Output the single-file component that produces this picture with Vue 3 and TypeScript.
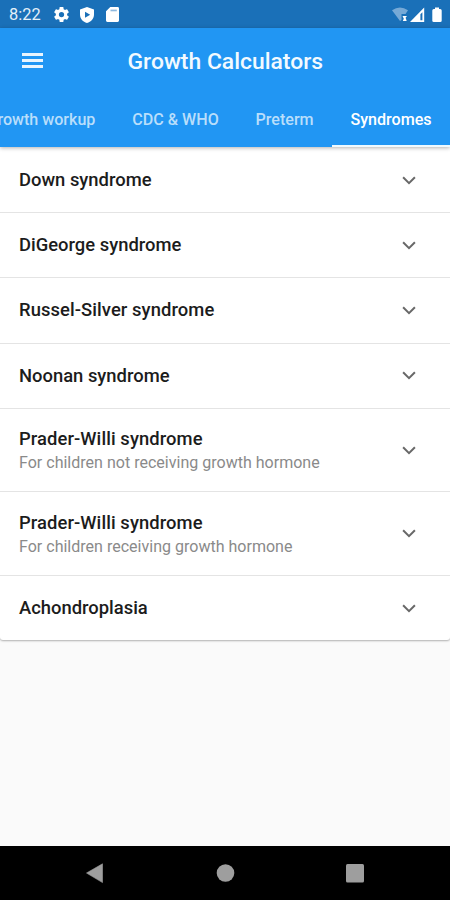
<script setup lang="ts">
interface Syndrome {
  id: number
  name: string
  note?: string
}

const tabs: { label: string; key: string }[] = [
  { label: 'Growth workup', key: 'workup' },
  { label: 'CDC & WHO', key: 'cdc' },
  { label: 'Preterm', key: 'preterm' },
  { label: 'Syndromes', key: 'syndromes' },
]
const activeTab = 'syndromes'

const syndromes: Syndrome[] = [
  { id: 1, name: 'Down syndrome' },
  { id: 2, name: 'DiGeorge syndrome' },
  { id: 3, name: 'Russel-Silver syndrome' },
  { id: 4, name: 'Noonan syndrome' },
  { id: 5, name: 'Prader-Willi syndrome', note: 'For children not receiving growth hormone' },
  { id: 6, name: 'Prader-Willi syndrome', note: 'For children receiving growth hormone' },
  { id: 7, name: 'Achondroplasia' },
]
</script>

<template>
  <div class="screen">
    <div class="status">
      <span class="clock">8:22</span>
      <svg class="gear" viewBox="2 2 20 20" width="15" height="15">
        <path fill="#fff" d="M19.43 12.98c.04-.32.07-.64.07-.98s-.03-.66-.07-.98l2.11-1.65c.19-.15.24-.42.12-.64l-2-3.46c-.12-.22-.39-.3-.61-.22l-2.49 1c-.52-.4-1.08-.73-1.69-.98l-.38-2.65C14.46 2.18 14.25 2 14 2h-4c-.25 0-.46.18-.49.42l-.38 2.65c-.61.25-1.17.59-1.69.98l-2.49-1c-.23-.09-.49 0-.61.22l-2 3.46c-.13.22-.07.49.12.64l2.11 1.65c-.04.32-.07.65-.07.98s.03.66.07.98l-2.11 1.65c-.19.15-.24.42-.12.64l2 3.46c.12.22.39.3.61.22l2.49-1c.52.4 1.08.73 1.69.98l.38 2.65c.03.24.24.42.49.42h4c.25 0 .46-.18.49-.42l.38-2.65c.61-.25 1.17-.59 1.69-.98l2.49 1c.23.09.49 0 .61-.22l2-3.46c.12-.22.07-.49-.12-.64zM12 15.5a3.5 3.5 0 1 1 0-7 3.5 3.5 0 0 1 0 7z" />
      </svg>
      <svg class="shield" viewBox="0 0 14 16" width="14" height="16">
        <path fill="#fff" fill-rule="evenodd" d="M7 0 14 2.6V7.5C14 11.5 11 15 7 16C3 15 0 11.5 0 7.5V2.6ZM5 4.8V10.8L10.2 7.8Z" />
      </svg>
      <svg class="card" viewBox="0 0 13 15" width="13" height="15">
        <path fill="#fff" fill-rule="evenodd" d="M4.3 0H11.6A1.4 1.4 0 0 1 13 1.4V13.6A1.4 1.4 0 0 1 11.6 15H1.4A1.4 1.4 0 0 1 0 13.6V4.3Z" />
        <path fill="#8fb9de" d="M4.5 2.6H10.8V4.3H4.5Z" />
      </svg>
      <span class="grow"></span>
      <svg class="signals" viewBox="0 0 52 18" width="52" height="18">
        <path fill="#76a9d6" d="M0 4.2Q8-1.2 16 4.2L13.5 8H9.5V14L8 15Z" />
        <path fill="#fff" d="M10.5 10H15L13.6 11.8 14.7 15H10.8L11.8 12.7Z" />
        <path fill="#fff" fill-rule="evenodd" d="M18 16 32.2 1.5V16ZM28.4 8.2V14.2H30.4V6.2Z" />
        <path fill="#fff" d="M43 1.5H47V3H48.2Q49.7 3 49.7 4.5V14.7Q49.7 16 48.2 16H41.8Q40.3 16 40.3 14.7V4.5Q40.3 3 41.8 3H43Z" />
      </svg>
    </div>

    <header class="appbar">
      <div class="titlebar">
        <button class="menu" aria-label="Menu"><i></i><i></i><i></i></button>
        <h1>Growth Calculators</h1>
      </div>
      <nav class="tabs">
        <a v-for="tab in tabs" :key="tab.key" :class="['tab', tab.key, { active: tab.key === activeTab }]">{{ tab.label }}</a>
      </nav>
    </header>

    <main class="body">
      <ul class="list">
        <li v-for="item in syndromes" :key="item.id" :class="['row', { tall: item.note }]">
          <div class="copy">
            <div :class="['name', { hyphenated: item.name.includes('-') }]">{{ item.name }}</div>
            <div v-if="item.note" class="note">{{ item.note }}</div>
          </div>
          <svg viewBox="0 0 14 9" width="14" height="9">
            <path d="M1.1 1.2 7 7.1 12.9 1.2" fill="none" stroke="#686868" stroke-width="2" />
          </svg>
        </li>
      </ul>
    </main>

    <footer class="navbar">
      <svg viewBox="0 0 450 54" width="450" height="54" fill="#9e9e9e">
        <path d="M86.5 27 102.5 17.8V36.6Z" stroke="#9e9e9e" stroke-width=".6" stroke-linejoin="round" />
        <circle cx="225.5" cy="27" r="8.8" />
        <rect x="346" y="18" width="18" height="18.5" rx="1.5" />
      </svg>
    </footer>
  </div>
</template>

<style>
body {
  margin: 0;
}
</style>

<style scoped>
.screen {
  display: flex;
  flex-direction: column;
  width: 450px;
  height: 900px;
  overflow: hidden;
  background: #fafafa;
  font-family: Roboto, "Liberation Sans", sans-serif;
}
.status {
  display: flex;
  align-items: center;
  flex: none;
  box-sizing: border-box;
  height: 28px;
  padding: 1px 6px 0 9px;
  background: #1a70b8;
}
.clock {
  width: 45px;
  color: #e3eff9;
  font-size: 16.4px;
  line-height: 28px;
}
.shield {
  margin-left: 11px;
}
.card {
  margin-left: 12px;
}
.grow {
  flex: 1;
}
.appbar {
  position: relative;
  z-index: 1;
  flex: none;
  height: 119px;
  background: #2196f3;
  box-shadow: 0 1px 4px rgba(0, 0, 0, 0.3);
}
.titlebar {
  display: flex;
  align-items: center;
  height: 64px;
}
.menu {
  display: flex;
  flex-direction: column;
  gap: 3px;
  width: 21px;
  margin: 0 0 0 22px;
  padding: 0;
  border: 0;
  background: none;
}
.menu i {
  height: 3px;
  background: #e9f5fe;
}
h1 {
  margin: 4px 0 0 84.5px;
  color: #f3faff;
  font-size: 22.9px;
  font-weight: 500;
  line-height: 30px;
  white-space: nowrap;
}
.tabs {
  display: flex;
  justify-content: flex-end;
  height: 55px;
}
.tab {
  flex: none;
  box-sizing: border-box;
  height: 55px;
  padding: 0 18.4px;
  color: #b9defb;
  font-size: 16.1px;
  font-weight: 500;
  line-height: 55px;
  white-space: nowrap;
}
.tab.active {
  border-bottom: 2.4px solid #effaff;
  color: #fff;
}
.body {
  flex: 1;
}
.list {
  margin: 0;
  padding: 1px 0 0;
  border-radius: 0 0 3px 3px;
  background: #fff;
  box-shadow: 0 1px 2px rgba(0, 0, 0, 0.3);
  list-style: none;
}
.row {
  display: flex;
  align-items: center;
  justify-content: space-between;
  box-sizing: border-box;
  height: 65.2px;
  padding: 0 34px 0 19px;
  border-bottom: 1.5px solid #e4e4e4;
}
.row.tall {
  height: 83.6px;
}
.row.tall .copy {
  padding-top: 2px;
}
.row:last-child {
  height: 64.5px;
  border-bottom: 0;
}
.name {
  color: #1c1c1c;
  font-size: 18.4px;
  font-weight: 500;
  line-height: 24px;
}
.name.hyphenated {
  letter-spacing: 0.08px;
}
.note {
  color: #8a8a8a;
  font-size: 16.05px;
  line-height: 24px;
}
.navbar {
  flex: none;
  height: 54px;
  background: #000;
}
.navbar svg {
  display: block;
}
</style>
